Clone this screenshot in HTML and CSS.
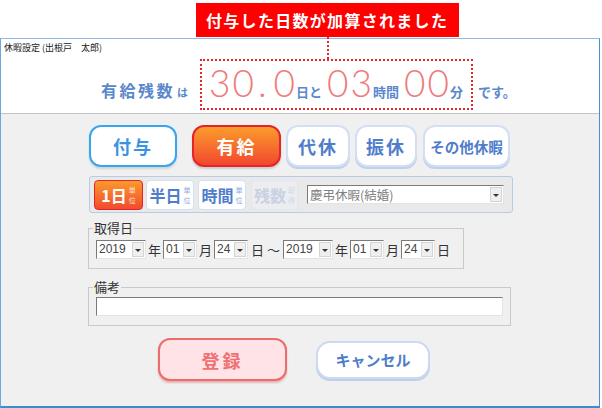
FILE: index.html
```html
<!DOCTYPE html>
<html lang="ja">
<head>
    <meta charset="UTF-8">
    <title>休暇設定</title>
    <link rel="stylesheet" href="styles.css">
</head>
<body>
<div class="page">
    <div class="banner-row">
        <div class="banner">付与した日数が加算されました</div>
    </div>

    <div class="window">
        <div class="window-head">
            <div class="title">休暇設定 (出根戸　太郎)</div>
            <div class="summary">
                <span class="label">有給残数<small>は</small></span>
                <div class="remain">
                    <span class="num">30</span><span class="num dot">.</span><span class="num">0</span><span class="unit">日と</span>
                    <span class="num gap">03</span><span class="unit">時間</span>
                    <span class="num gap">00</span><span class="unit">分</span>
                </div>
                <span class="tail">です。</span>
            </div>
        </div>

        <div class="window-body">
            <!-- kind of leave -->
            <div class="modes">
                <div class="btn btn-give">付与</div>
                <div class="btn btn-paid">有給</div>
                <div class="btn btn-plain w-daikyu">代休</div>
                <div class="btn btn-plain w-furikyu">振休</div>
                <div class="btn btn-plain btn-other">その他休暇</div>
            </div>

            <!-- unit of leave -->
            <div class="units">
                <div class="unit-btn unit-on w1"><span>1日</span><span class="tag"><i>単</i><i>位</i></span></div>
                <div class="unit-btn w2"><span>半日</span><span class="tag"><i>単</i><i>位</i></span></div>
                <div class="unit-btn w3"><span>時間</span><span class="tag"><i>単</i><i>位</i></span></div>
                <div class="unit-btn unit-off w4"><span>残数</span><span class="tag"><i>取</i><i>得</i></span></div>
                <div class="combo combo-kind">
                    <span class="value">慶弔休暇(結婚)</span>
                    <span class="arrow"></span>
                </div>
            </div>

            <fieldset class="group group-date">
                <legend>取得日</legend>
                <div class="date-row">
                    <div class="combo c-year"><span class="value">2019</span><span class="arrow"></span></div>
                    <span class="sep">年</span>
                    <div class="combo c-small"><span class="value">01</span><span class="arrow"></span></div>
                    <span class="sep">月</span>
                    <div class="combo c-small"><span class="value">24</span><span class="arrow"></span></div>
                    <span class="sep range">日～</span>
                    <div class="combo c-year"><span class="value">2019</span><span class="arrow"></span></div>
                    <span class="sep">年</span>
                    <div class="combo c-small"><span class="value">01</span><span class="arrow"></span></div>
                    <span class="sep">月</span>
                    <div class="combo c-small"><span class="value">24</span><span class="arrow"></span></div>
                    <span class="sep">日</span>
                </div>
            </fieldset>

            <fieldset class="group group-note">
                <legend>備考</legend>
                <div class="note-input"></div>
            </fieldset>

            <div class="actions">
                <div class="btn btn-save">登録</div>
                <div class="btn btn-cancel">キャンセル</div>
            </div>
        </div>
    </div>

    <span class="connector"></span>
</div>
</body>
</html>
```

FILE: styles.css
```css
body {
    margin: 0;
    background-color: #fff;
    font-family: "Noto Sans CJK JP", sans-serif;
    color: #333;
}

.page {
    position: relative;
    width: 602px;
    height: 408px;
}

/* notice banner */
.banner-row {
    height: 38px;
    box-sizing: border-box;
    padding: 3px 0 0 196px;
}

.banner {
    display: inline-block;
    height: 34px;
    line-height: 34px;
    padding: 0 11px 0 10px;
    background-color: #ff0000;
    color: #fff;
    font-size: 16px;
    font-weight: bold;
    letter-spacing: 1.3px;
}

.connector {
    position: absolute;
    left: 327px;
    top: 37px;
    height: 22px;
    border-left: 2px dotted #e8262a;
}

/* window */
.window {
    width: 600px;
    height: 370px;
    box-sizing: border-box;
    border: 1px solid #8dbbe6;
    border-left-color: #6ca8de;
    border-right-color: #4a90d0;
    border-bottom: 2px solid #3f8bcf;
    display: flex;
    flex-direction: column;
}

.window-head {
    height: 74px;
    background-color: #fff;
}

.title {
    padding: 4px 0 0 3px;
    font-size: 9px;
    line-height: 10px;
    color: #222;
}

.summary {
    display: flex;
    align-items: baseline;
    margin-top: 6px;
    padding-left: 100px;
    color: #5b87cb;
    font-weight: bold;
    white-space: nowrap;
}

.label {
    font-size: 16px;
    letter-spacing: 2.5px;
    width: 99px;
}

.label small {
    font-size: 11px;
    margin-left: 2px;
}

.remain {
    display: flex;
    align-items: baseline;
    flex-shrink: 0;
    height: 51px;
    width: 273px;
    box-sizing: border-box;
    padding: 3px 0 0 7px;
    border: 2px dotted #e8262a;
}

.remain span {
    flex-shrink: 0;
}

.num {
    font-family: Lato, "Open Sans", sans-serif;
    font-weight: 300;
    font-size: 37px;
    line-height: 1;
    letter-spacing: 2px;
    color: #ee7c7c;
}

.num.dot {
    letter-spacing: 0;
    padding: 0 7px 0 2px;
}

.num.gap {
    margin-left: 5px;
}

.unit {
    font-size: 13px;
    margin-left: -1px;
}

.tail {
    font-size: 13px;
    margin-left: 5px;
}

.window-body {
    flex: 1;
    background-color: #f0f0f0;
    border-top: 1px solid #c4c4c4;
}

/* big buttons */
.btn {
    box-sizing: border-box;
    display: flex;
    align-items: center;
    justify-content: center;
    border-radius: 12px;
    font-weight: bold;
}

.modes {
    display: flex;
    margin: 11px 0 0 88px;
}

.modes .btn {
    height: 42px;
    font-size: 18px;
    letter-spacing: 2px;
}

.btn-give {
    width: 88px;
    background-color: #fff;
    border: 2px solid #36a5f2;
    box-shadow: 0 2px 2px rgba(0, 0, 0, 0.12);
    color: #3a93e2;
}

.btn-paid {
    width: 89px;
    margin-left: 15px;
    background: linear-gradient(#fb9c2c, #f2472f);
    border: 2px solid #e4242a;
    box-shadow: 0 2px 2px rgba(0, 0, 0, 0.15);
    color: #fff;
}

.btn-plain {
    background-color: #fff;
    border: 2px solid #d3dff2;
    box-shadow: 0 2px 0 #bfd0ec;
    color: #4f7dcc;
}

.w-daikyu {
    width: 64px;
    margin-left: 5px;
}

.w-furikyu {
    width: 62px;
    margin-left: 5px;
}

.modes .btn-other {
    width: 87px;
    margin-left: 6px;
    font-size: 14.5px;
    letter-spacing: 0;
}

/* unit bar */
.units {
    display: flex;
    align-items: center;
    width: 424px;
    height: 37px;
    box-sizing: border-box;
    margin: 9px 0 0 88px;
    padding-left: 4px;
    border: 1px solid #b9cae6;
    border-radius: 3px;
    background-color: #e9e9e9;
}

.unit-btn {
    display: flex;
    align-items: center;
    justify-content: center;
    height: 30px;
    box-sizing: border-box;
    border-radius: 4px;
    border: 1px solid #d6e0f0;
    background-color: #fff;
    color: #4f7dcc;
    font-size: 16px;
    font-weight: bold;
    line-height: 20px;
}

.tag {
    display: flex;
    flex-direction: column;
    margin-left: 2px;
    color: #8eabdd;
    font-weight: normal;
}

.tag i {
    font-style: normal;
    font-size: 7px;
    line-height: 10px;
}

.w1 { width: 49px; }
.w2 { width: 48px; margin-left: 3px; }
.w3 { width: 48px; margin-left: 4px; }
.w4 { width: 47px; margin-left: 5px; }

.unit-on {
    background: linear-gradient(#fb9a2c, #f24a2f);
    border-color: #e4242a;
    color: #fff;
}

.unit-on .tag {
    color: #ffe0c8;
}

.unit-off {
    background-color: #ecedf0;
    border-color: #e2e6ee;
    color: #c9d1e2;
}

.unit-off .tag {
    color: #d3d9e6;
}

/* combo boxes */
.combo {
    display: flex;
    height: 19px;
    box-sizing: border-box;
    border: 1px solid;
    border-color: #7a7a7a #e3e3e3 #e3e3e3 #7a7a7a;
    background-color: #fff;
}

.combo .value {
    flex: 1;
    padding-left: 2px;
    font-family: "Liberation Sans", "Noto Sans CJK JP", sans-serif;
    font-size: 12px;
    line-height: 17px;
    color: #444;
}

.combo .arrow {
    position: relative;
    width: 12px;
    margin: 1px;
    background-color: #efefef;
    border: 1px solid #d4d4d4;
    box-sizing: border-box;
}

.combo .arrow::after {
    content: "";
    position: absolute;
    left: 2px;
    top: 6px;
    border-top: 3px solid #333;
    border-left: 3px solid transparent;
    border-right: 3px solid transparent;
}

.combo-kind {
    width: 197px;
    margin-left: 9px;
}

.combo-kind .value {
    font-family: "Noto Sans CJK JP", sans-serif;
    color: #808080;
    font-size: 12.5px;
}

.c-year { width: 50px; }
.c-small { width: 34px; }

/* group boxes */
.group {
    margin: 0 0 0 87px;
    padding: 0 0 9px 7px;
    border: 1px solid #c9c9c9;
    min-inline-size: 0;
}

.group legend {
    margin-left: -3px;
    padding: 0 1px;
    font-size: 13px;
    line-height: 16px;
    color: #333;
}

.group-date {
    width: 376px;
    box-sizing: border-box;
    margin-top: 7px;
}

.date-row {
    display: flex;
    align-items: center;
    margin-top: 4px;
}

.sep {
    font-size: 13px;
    padding: 0 2px 0 2px;
    line-height: 18px;
}

.sep.range {
    letter-spacing: 3px;
    padding-left: 3px;
    padding-right: 0;
}

.group-note {
    width: 423px;
    box-sizing: border-box;
    margin-top: 10px;
}

.note-input {
    width: 407px;
    height: 19px;
    margin-top: 2px;
    box-sizing: border-box;
    border: 1px solid;
    border-color: #7a7a7a #e3e3e3 #e3e3e3 #7a7a7a;
    background-color: #fff;
}

/* bottom buttons */
.actions {
    display: flex;
    align-items: center;
    margin: 12px 0 0 157px;
}

.btn-save {
    width: 129px;
    height: 43px;
    background-color: #ffe3e6;
    border: 2px solid #ec6c6c;
    box-shadow: 0 2px 2px rgba(200, 70, 70, 0.35);
    color: #ef7171;
    font-size: 18px;
    letter-spacing: 3px;
}

.btn-cancel {
    width: 114px;
    height: 38px;
    margin-left: 29px;
    border-radius: 14px;
    background-color: #fff;
    border: 2px solid #ccdaf1;
    box-shadow: 0 2px 0 #c0d0ea;
    color: #4f7dcc;
    font-size: 15px;
}
```
